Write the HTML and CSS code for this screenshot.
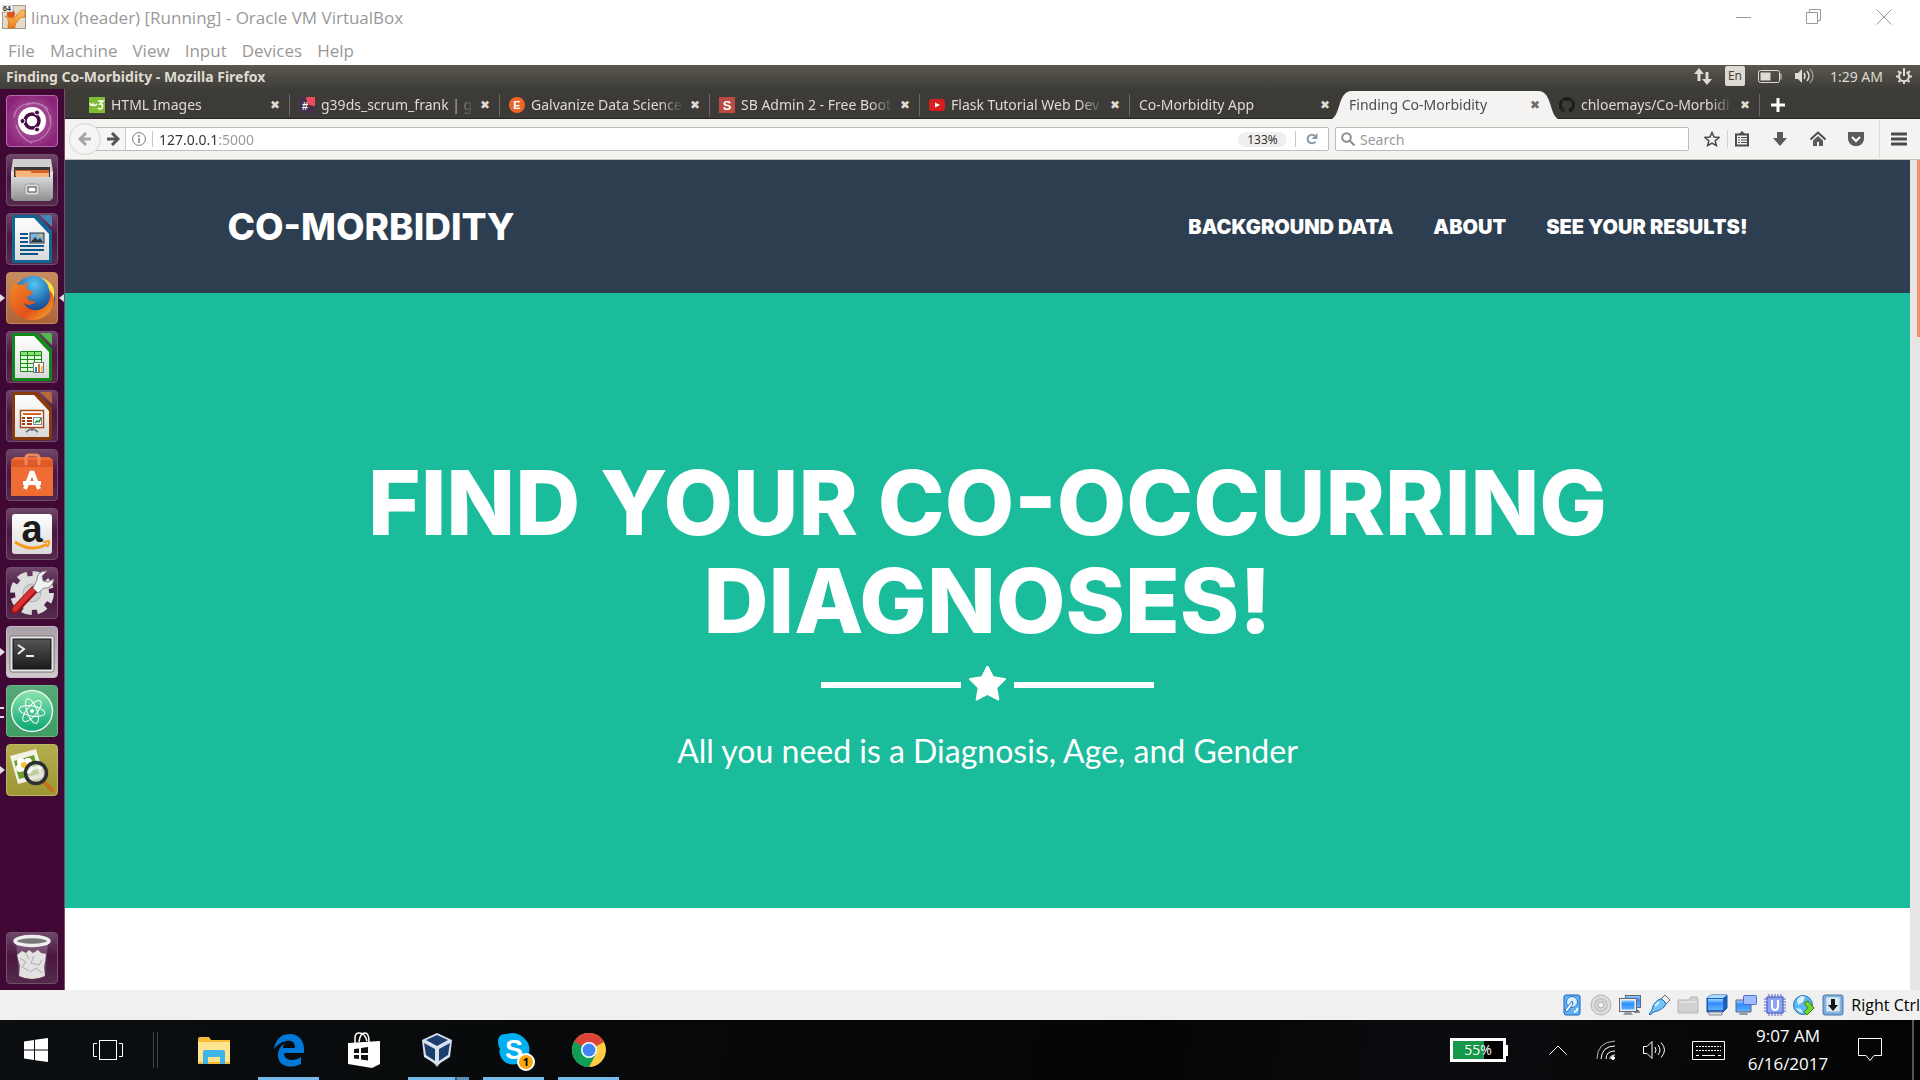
FILE: index.html
```html
<!DOCTYPE html>
<html lang="en">
<head>
<meta charset="utf-8">
<title>linux (header) [Running] - Oracle VM VirtualBox</title>
<meta name="viewport" content="width=device-width, initial-scale=1">
<link rel="stylesheet" href="styles.css">
</head>
<body>
<svg class="defs" aria-hidden="true">
  <defs>
    <linearGradient id="orange" x1="0" y1="0" x2="0" y2="1"><stop offset="0" stop-color="#ffc36b"/><stop offset="1" stop-color="#f07d1c"/></linearGradient>
    <linearGradient id="silver" x1="0" y1="0" x2="0" y2="1"><stop offset="0" stop-color="#e8e8e8"/><stop offset="1" stop-color="#8f8f8f"/></linearGradient>
    <linearGradient id="paper" x1="0" y1="0" x2="0" y2="1"><stop offset="0" stop-color="#fff"/><stop offset="1" stop-color="#d9d9d9"/></linearGradient>
    <linearGradient id="screen" x1="0" y1="0" x2="0" y2="1"><stop offset="0" stop-color="#9fd3ff"/><stop offset=".4" stop-color="#2f8dff"/><stop offset="1" stop-color="#65b5ff"/></linearGradient>
    <linearGradient id="term" x1="0" y1="0" x2="0" y2="1"><stop offset="0" stop-color="#555"/><stop offset="1" stop-color="#1c1c1c"/></linearGradient>
    <linearGradient id="leaf" x1="0" y1="0" x2="0" y2="1"><stop offset="0" stop-color="#8de6ad"/><stop offset="1" stop-color="#0aa574"/></linearGradient>
    <radialGradient id="globe" cx=".5" cy=".2" r=".8"><stop offset="0" stop-color="#55c5f2"/><stop offset=".6" stop-color="#1d62a8"/><stop offset="1" stop-color="#0d2a60"/></radialGradient>
    <linearGradient id="fox" x1="0" y1="0" x2="1" y2="1"><stop offset="0" stop-color="#f28a26"/><stop offset=".6" stop-color="#e2521b"/><stop offset="1" stop-color="#f7b32b"/></linearGradient>
  </defs>
</svg>

<header class="host-title">
  <svg class="vm-icon" viewBox="0 0 24 24" aria-hidden="true">
    <rect x=".5" y=".5" width="23" height="23" fill="#e4dccb" stroke="#a39a86"/>
    <path d="M3 11q5-1 8 2c4 0 5-9 12-8v7c-6 0-6 3-8 5-2 2-2 4-2 6H6c0-6 2-8-3-12z" fill="url(#orange)" stroke="#b9651a" stroke-width=".6"/>
    <circle cx="9" cy="9" r="4" fill="#e2551d"/>
    <rect x="0" y="0" width="11" height="7" fill="#fff" stroke="#777" stroke-width=".5"/>
    <text x="1" y="6" font-size="7" font-weight="700" fill="#222">64</text>
  </svg>
  <span class="host-name">linux (header) [Running] - Oracle VM VirtualBox</span>
  <div class="window-controls">
    <button type="button" aria-label="Minimize"><svg viewBox="0 0 16 16"><path d="M0 8.500h15"/></svg></button>
    <button type="button" aria-label="Restore"><svg viewBox="0 0 16 16"><path d="M.5 3.500h11v11H.5zM3.500 3.500v-3h11v11h-3"/></svg></button>
    <button type="button" aria-label="Close"><svg viewBox="0 0 16 16"><path d="M.5.5l15 15M15.500.5l-15 15"/></svg></button>
  </div>
</header>

<nav class="host-menu" aria-label="Virtual machine menu">
  <button type="button">File</button>
  <button type="button">Machine</button>
  <button type="button">View</button>
  <button type="button">Input</button>
  <button type="button">Devices</button>
  <button type="button">Help</button>
</nav>

<div class="guest">
  <div class="panel">
    <span class="panel-title">Finding Co-Morbidity - Mozilla Firefox</span>
    <div class="indicators">
      <svg width="18" height="17" viewBox="0 0 18 17" fill="#dfdbd2"><path d="M5 0l5 6H6.500v7h-3V6H0zM13 17l-5-6h3.500V4h3v7H18z"/></svg>
      <span class="lang">En</span>
      <svg width="24" height="13" viewBox="0 0 24 13"><rect x=".5" y=".5" width="21" height="12" rx="2" fill="none" stroke="#dfdbd2"/><rect x="2.500" y="2.500" width="10" height="8" fill="#dfdbd2"/><path d="M22.500 3.500h1v6h-1z" fill="#dfdbd2"/></svg>
      <svg width="20" height="16" viewBox="0 0 20 16" fill="none" stroke="#dfdbd2" stroke-width="1.500"><path d="M0 5h3l4-4v14l-4-4H0z" fill="#dfdbd2" stroke="none"/><path d="M9 5q2 3 0 6M12 3q4 5 0 10"/><path d="M15 1q6 7 0 14" opacity=".5"/></svg>
      <time class="panel-clock">1:29 AM</time>
      <svg width="16" height="16" viewBox="0 0 16 16" fill="none" stroke="#dfdbd2"><path d="M5.500 4a5 5 0 1 0 5 0" stroke-width="2"/><path d="M8 0v8M0 8.500h3M13 8.500h3M2 3l2 2M14 3l-2 2M2.500 14l2-2M13.500 14l-2-2M8 13v3" stroke-width="2"/></svg>
    </div>
  </div>

  <div class="desktop">
    <nav class="launcher" aria-label="Launcher">
      <button type="button" class="tile dash" aria-label="Search your computer">
        <svg viewBox="0 0 52 52"><path d="M8 22C10 8 30 3 42 14M44 20c4 14-6 26-20 27M10 30c3 10 10 16 16 18M20 10c14-6 24 4 24 16" fill="none" stroke="#fff" stroke-opacity=".3" stroke-width="1.500"/><circle cx="26" cy="26" r="14" fill="#fff"/><circle cx="26" cy="26" r="7" fill="none" stroke="#4c0b46" stroke-width="3.500"/><g fill="#4c0b46" stroke="#fff" stroke-width="1"><circle cx="16.500" cy="26" r="2.500"/><circle cx="31" cy="17.500" r="2.500"/><circle cx="31" cy="34.500" r="2.500"/></g></svg>
      </button>
      <button type="button" class="tile" aria-label="Files">
        <svg viewBox="0 0 52 52"><path d="M7 5h38l2 13H5z" fill="#cfcfcf"/><path d="M8 13h36v12H8z" fill="#3a3a3a"/><path d="M9 16h34v6H9z" fill="#d9622b"/><path d="M10 17h14l2 2h17v4H10z" fill="#f5b87c"/><path d="M5 18h3v5h36v-5h3v26l-3 3H8l-3-3z" fill="url(#silver)"/><rect x="19" y="30" width="14" height="11" rx="2" fill="#ddd" stroke="#999"/><rect x="22" y="33" width="8" height="5" fill="#fff" stroke="#444"/></svg>
      </button>
      <button type="button" class="tile" aria-label="LibreOffice Writer">
        <svg viewBox="0 0 52 52"><path d="M8 2h23l15 16v30q0 2-2 2H8q-2 0-2-2V4q0-2 2-2z" fill="#106797"/><path d="M34 2h10q2 0 2 2v10z" fill="#4287b8"/><path d="M9 5h19l15 16v26H9z" fill="url(#paper)"/><path d="M14 21h8M14 25h8M14 29h8M14 33h24M14 37h24M14 41h18" stroke="#0d568a" stroke-width="2"/><rect x="24" y="20" width="14" height="10" fill="#7db4df" stroke="#234"/><path d="M25 29l4-5 3 3 2-2 3 4z" fill="#333"/><circle cx="34.500" cy="22.500" r="1.500" fill="#f6b32d"/></svg>
      </button>
      <button type="button" class="tile firefox running focused" aria-label="Firefox">
        <svg viewBox="0 0 52 52"><circle cx="28" cy="25" r="21" fill="url(#globe)"/><path d="M33 5c8 4 9 8 10 12 4 12-2 18-7 21 10-2 15-14 11-23-2-4-6-8-14-10z" fill="#fbe14b"/><path d="M8 9c1 1 2 3 3 4 2-1 5-1 7 0 1-2 3-3 5-3-3 3-3 6-1 8l5 2c0 3-4 3-6 5 1 4 5 5 9 4-2 4-8 5-12 2 4 9 18 10 24 0 3-4 2-9 1-13 5 4 5 10 5 10 0 10-9 20-21 20C13 48 4 38 4 27c0-8 2-10 4-18z" fill="url(#fox)"/></svg>
      </button>
      <button type="button" class="tile" aria-label="LibreOffice Calc">
        <svg viewBox="0 0 52 52"><path d="M8 2h23l15 16v30q0 2-2 2H8q-2 0-2-2V4q0-2 2-2z" fill="#118a18"/><path d="M34 2h10q2 0 2 2v10z" fill="#51b84e"/><path d="M9 5h19l15 16v26H9z" fill="url(#paper)"/><path d="M14 20h22v20H14z" fill="#e3f7dc"/><path d="M14 21h22v3H14z" fill="#8be076"/><path d="M14.500 20.500h21v20h-21zM14 24.500h22M14 28.500h22M14 32.500h22M14 36.500h22M21.500 20v20M28.500 20v20" fill="none" stroke="#168a18"/><rect x="27.500" y="31.500" width="10" height="10" fill="#fff" stroke="#777"/><path d="M29 36h2v5h-2z" fill="#1688c8"/><path d="M32 33h2v8h-2z" fill="#e67519"/><path d="M35 35h2v6h-2z" fill="#f7be6e"/></svg>
      </button>
      <button type="button" class="tile" aria-label="LibreOffice Impress">
        <svg viewBox="0 0 52 52"><path d="M8 2h23l15 16v30q0 2-2 2H8q-2 0-2-2V4q0-2 2-2z" fill="#8b3a0c"/><path d="M34 2h10q2 0 2 2v10z" fill="#b7683c"/><path d="M9 5h19l15 16v26H9z" fill="url(#paper)"/><path d="M26 37v4M26 38l-6 4M26 38l6 4" stroke="#777" stroke-width="2"/><rect x="14.500" y="20.500" width="23" height="17" fill="#fff" stroke="#a8481a" stroke-width="1.500"/><path d="M17 24h18" stroke="#d2642a" stroke-width="2"/><path d="M16 28h3M16 31h3M16 34h3M21 28h5M21 31h5M21 34h5" stroke="#9b3d10" stroke-width="2"/><rect x="27.500" y="27.500" width="8" height="7" fill="#fff" stroke="#888"/><path d="M29 33l2-2 2 1 2-4" fill="none" stroke="#139a30" stroke-width="1.500"/></svg>
      </button>
      <button type="button" class="tile" aria-label="Ubuntu Software">
        <svg viewBox="0 0 52 52"><path d="M5 11l4-3h34l4 3v36H5z" fill="#f06c35"/><path d="M5 11h42v7H5z" fill="#e05a28"/><path d="M20 16V9q0-3 3-3h7q3 0 3 3v7" fill="none" stroke="#e9875f" stroke-width="3"/><path d="M26 22l-7 18M26 22l7 18M17 34h18" stroke="#fff" stroke-width="4" fill="none"/></svg>
      </button>
      <button type="button" class="tile" aria-label="Amazon">
        <svg viewBox="0 0 52 52"><rect x="6" y="6" width="40" height="40" rx="3" fill="url(#paper)"/><text x="26" y="34" text-anchor="middle" font-size="38" font-weight="700" fill="#1b1b1b">a</text><path d="M9 34q16 11 32 2" fill="none" stroke="#f79a1b" stroke-width="3"/><path d="M37 34l6-1q1 2-2 6" fill="none" stroke="#f79a1b" stroke-width="2"/></svg>
      </button>
      <button type="button" class="tile" aria-label="System Settings">
        <svg viewBox="0 0 52 52"><circle cx="26" cy="26" r="18" fill="none" stroke="#dcdcdc" stroke-width="8" stroke-dasharray="9 5.140"/><circle cx="26" cy="26" r="12.500" fill="#e4e4e4" stroke="#dedede" stroke-width="9"/><circle cx="26" cy="26" r="9" fill="#cfcfcf" stroke="#b0b0b0"/><path d="M9 43L28 23" stroke="#96131a" stroke-width="8" stroke-linecap="round"/><path d="M9 42L27 23" stroke="#d93232" stroke-width="5" stroke-linecap="round"/><path d="M27 21l5 5 6-5q8 1 10-9l-6 3-5-1-1-5 5-5q-10 0-10 9z" fill="#f2f2f2" stroke="#888"/></svg>
      </button>
      <button type="button" class="tile terminal running" aria-label="Terminal">
        <svg viewBox="0 0 52 52"><rect x="4" y="10" width="44" height="36" rx="2" fill="#e9e9e9" stroke="#777"/><rect x="7" y="13" width="38" height="30" fill="url(#term)" stroke="#111"/><path d="M12 19l6 4-6 5M20 30h8" fill="none" stroke="#eee" stroke-width="2"/></svg>
      </button>
      <button type="button" class="tile atom running many" aria-label="Atom">
        <svg viewBox="0 0 52 52"><circle cx="26" cy="26" r="20.500" fill="url(#leaf)" stroke="#e7f7ec" stroke-width="1.500"/><g fill="none" stroke="#fff"><ellipse cx="26" cy="26" rx="5" ry="13" transform="rotate(-20 26 26)"/><ellipse cx="26" cy="26" rx="5" ry="13" transform="rotate(40 26 26)"/><ellipse cx="26" cy="26" rx="5" ry="13" transform="rotate(100 26 26)"/></g><circle cx="26" cy="26" r="2" fill="#fff"/></svg>
      </button>
      <button type="button" class="tile viewer running" aria-label="Image Viewer">
        <svg viewBox="0 0 52 52"><path d="M4 12l26-7 8 28-26 7z" fill="#f2f2e6"/><path d="M8 17l20-6 5 19-20 5z" fill="#69a12c"/><g fill="#fff"><circle cx="15" cy="18" r="4"/><circle cx="22" cy="18" r="4"/><circle cx="14" cy="24" r="4"/><circle cx="22" cy="25" r="5"/></g><circle cx="18" cy="21" r="3" fill="#f4c62a"/><path d="M38 38l8 8" stroke="#c96f1c" stroke-width="4" stroke-linecap="round"/><circle cx="30" cy="29" r="10.500" fill="#dfe0d5" fill-opacity=".7" stroke="#2c3032" stroke-width="3.500"/><path d="M22 29q3-6 14-5" stroke="#fff" stroke-width="3" fill="none" opacity=".7"/></svg>
      </button>
      <button type="button" class="tile trash" aria-label="Trash">
        <svg viewBox="0 0 52 52"><path d="M10 10l3 34q13 6 26 0l3-34z" fill="#b9a5b7" fill-opacity=".35"/><path d="M11 23l5-4 4 2 3-3 4 3 5-3 3 3 5 1-1 8-1 5 1 9q-13 6-26 0l1-10z" fill="#e2e2e0"/><path d="M14 26l6 4-4 5 7 4M28 24l-3 7 8 2 3-5M24 40l6-4 6 5M20 22l3 5" stroke="#aaa" fill="none"/><ellipse cx="26" cy="9" rx="17" ry="4.500" fill="#777" stroke="#eee" stroke-width="3.500"/></svg>
      </button>
    </nav>

    <main class="browser">
      <div class="tabs">
        <div class="tab"><svg class="fav" viewBox="0 0 16 16"><rect width="16" height="16" fill="#80bd34"/><path d="M1 6q1 4 3 1 1 3 4 0M9 4h5l-3 3q4 0 2 4-2 2-4 0" fill="none" stroke="#fff" stroke-width="1.500"/></svg><span class="tab-label">HTML Images</span><button type="button" class="x" aria-label="Close tab">✖</button></div>
        <div class="tab"><svg class="fav" viewBox="0 0 16 16"><rect width="16" height="16" fill="#46304c"/><path d="M7 0h9v9q-8 1-9-9z" fill="#ed4a5b"/><text x="3" y="13" font-size="11" font-weight="700" fill="#fff">#</text></svg><span class="tab-label">g39ds_scrum_frank | g</span><button type="button" class="x" aria-label="Close tab">✖</button></div>
        <div class="tab"><svg class="fav" viewBox="0 0 16 16"><circle cx="8" cy="8" r="8" fill="#f16529"/><text x="8" y="12" text-anchor="middle" font-size="11" font-weight="700" fill="#fff">E</text></svg><span class="tab-label">Galvanize Data Science</span><button type="button" class="x" aria-label="Close tab">✖</button></div>
        <div class="tab"><svg class="fav" viewBox="0 0 16 16"><rect width="16" height="16" fill="#bb4a42"/><text x="8" y="13" text-anchor="middle" font-size="13" font-weight="700" fill="#fff">S</text></svg><span class="tab-label">SB Admin 2 - Free Boot</span><button type="button" class="x" aria-label="Close tab">✖</button></div>
        <div class="tab"><svg class="fav" viewBox="0 0 16 16"><rect y="2" width="16" height="12" rx="3" fill="#d81f1f"/><path d="M6 5.500l5 2.500-5 2.500z" fill="#fff"/></svg><span class="tab-label">Flask Tutorial Web Dev</span><button type="button" class="x" aria-label="Close tab">✖</button></div>
        <div class="tab last"><span class="tab-label">Co-Morbidity App</span><button type="button" class="x" aria-label="Close tab">✖</button></div>
        <div class="tab active"><svg class="tab-shape" viewBox="0 0 234 28" preserveAspectRatio="none" aria-hidden="true"><path d="M0 28C14 28 8 0 24 0h186c16 0 10 28 24 28z" fill="#f4f3f2"/></svg><span class="tab-label">Finding Co-Morbidity</span><button type="button" class="x" aria-label="Close tab">✖</button></div>
        <div class="tab"><svg class="fav" viewBox="0 0 16 16"><path fill="#1b1b1a" d="M8 0a8 8 0 0 0-2.500 15.600c.4.100.5-.2.500-.4v-1.400c-2.200.500-2.700-1-2.700-1-.4-.900-.9-1.200-.9-1.200-.700-.5.100-.5.100-.5.800.1 1.200.8 1.200.8.700 1.200 1.900.9 2.300.7.100-.5.300-.9.500-1.100-1.800-.2-3.600-.9-3.600-4 0-.9.300-1.600.8-2.200 0-.2-.3-1 .1-2.100 0 0 .7-.2 2.200.8a7.700 7.700 0 0 1 4 0c1.500-1 2.200-.8 2.200-.8.4 1.100.1 1.900.1 2.100.5.600.8 1.300.8 2.200 0 3.100-1.900 3.700-3.700 3.900.3.300.6.800.6 1.500v2.300c0 .2.100.5.500.4A8 8 0 0 0 8 0z"/></svg><span class="tab-label">chloemays/Co-Morbidi</span><button type="button" class="x" aria-label="Close tab">✖</button></div>
        <button type="button" class="new-tab" aria-label="New tab"><svg viewBox="0 0 14 14"><path d="M7 0v14M0 7h14" stroke="#fff" stroke-width="3"/></svg></button>
      </div>

      <div class="toolbar">
        <button type="button" class="back" aria-label="Back"><svg viewBox="0 0 14 14"><path d="M13 7H2M8 1L2 7l6 6" fill="none" stroke="#a5a5a4" stroke-width="3"/></svg></button>
        <div class="address">
          <button type="button" class="forward" aria-label="Forward"><svg viewBox="0 0 14 14"><path d="M1 7h10M6 1l6 6-6 6" fill="none" stroke="#555" stroke-width="3"/></svg></button>
          <svg class="info" viewBox="0 0 14 14" fill="none" stroke="#7a7a7a"><circle cx="7" cy="7" r="6.400"/><path d="M7 3v2M7 6v5" stroke-width="1.500"/></svg>
          <input class="url" type="text" aria-label="Address" value="127.0.0.1:5000">
          <button type="button" class="zoom">133%</button>
          <button type="button" class="reload" aria-label="Reload"><svg viewBox="0 0 12 12"><path d="M9.500 8.500A4.300 4.300 0 1 1 9 3" fill="none" stroke="#8b98ab" stroke-width="2"/><path d="M11.500 0v6h-6z" fill="#8b98ab"/></svg></button>
        </div>
        <label class="search"><svg viewBox="0 0 14 14" fill="none" stroke="#8d8d8c" stroke-width="2"><circle cx="5.500" cy="5.500" r="4.300"/><path d="M8.500 8.500l5 5"/></svg><input type="search" placeholder="Search" aria-label="Search"></label>
        <div class="tools">
          <button type="button" aria-label="Bookmark this page"><svg viewBox="0 0 16 16"><path d="M8 1.500l2 4.600 5 .4-3.800 3.200 1.200 4.900L8 12l-4.400 2.600 1.200-4.900L1 6.500l5-.4z" fill="none" stroke="#4b4b4b" stroke-width="1.500"/></svg></button>
          <button type="button" class="divided" aria-label="Show bookmarks"><svg viewBox="0 0 16 16"><path d="M2 3.500h12v11H2z" fill="none" stroke="#4b4b4b" stroke-width="2"/><path d="M5 3l3-3 3 3z" fill="#4b4b4b"/><path d="M4 6.500h2M4 9h2M4 11.500h2M7 6.500h6M7 9h6M7 11.500h6" stroke="#4b4b4b"/></svg></button>
          <button type="button" aria-label="Downloads"><svg viewBox="0 0 16 16"><path d="M5 1h6v6h4l-7 8-7-8h4z" fill="#5b5b5b"/></svg></button>
          <button type="button" aria-label="Home"><svg viewBox="0 0 16 16"><path d="M3 9.500V15h4v-4h2v4h4V9.500L8 5z" fill="#5b5b5b"/><path d="M.5 8.500L8 1.500l7.500 7" fill="none" stroke="#4b4b4b" stroke-width="2"/></svg></button>
          <button type="button" aria-label="Pocket"><svg viewBox="0 0 16 16"><path d="M0 1h16v6c0 11-16 11-16 0z" fill="#5b5b5b"/><path d="M4 6l4 4 4-4" fill="none" stroke="#fff" stroke-width="2"/></svg></button>
          <button type="button" class="burger" aria-label="Open menu"><svg viewBox="0 0 16 16"><path d="M1 3h14M1 8h14M1 13h14" stroke="#4b4b4b" stroke-width="3" stroke-linecap="round"/></svg></button>
        </div>
      </div>

      <div class="viewport">
        <div class="page">
          <nav class="navbar">
            <div class="container">
              <a class="brand" href="#top">CO-MORBIDITY</a>
              <div class="links">
                <a href="#background">BACKGROUND DATA</a>
                <a href="#about">ABOUT</a>
                <a href="#results">SEE YOUR RESULTS!</a>
              </div>
            </div>
          </nav>
          <section class="hero">
            <h1>FIND YOUR CO-OCCURRING DIAGNOSES!</h1>
            <div class="star-rule"><svg viewBox="64 64 1664 1664" aria-hidden="true"><path fill="#fff" d="M1728 647q0 22-26 48l-363 354 86 500q1 7 1 20 0 21-10.500 35.500t-30.500 14.500q-19 0-40-12l-449-236-449 236q-22 12-40 12-21 0-31.500-14.500t-10.500-35.500q0-6 2-20l86-500-364-354q-25-27-25-48 0-37 56-46l502-73 225-455q19-41 49-41t49 41l225 455 502 73q56 9 56 46z"/></svg></div>
            <p class="tagline">All you need is a Diagnosis, Age, and Gender</p>
          </section>
        </div>
        <div class="scrollbar"><div class="thumb"></div></div>
      </div>
    </main>
  </div>
</div>

<footer class="vm-status">
  <svg viewBox="0 0 22 22"><rect x="3" y="1" width="16" height="20" rx="2" fill="#5fb4f7" stroke="#1b62bf"/><circle cx="11" cy="8" r="5.500" fill="#d7efff" stroke="#2b77c5"/><path d="M4 16l7-9 1 3-6 8z" fill="#fff" stroke="#2b77c5"/><path d="M13 18q4-1 3-4" stroke="#fff" fill="none" stroke-width="2"/></svg>
  <svg viewBox="0 0 22 22"><circle cx="11" cy="11" r="10" fill="#dcdcdc" stroke="#b5b5b5"/><circle cx="11" cy="11" r="6" fill="none" stroke="#c5c5c5" stroke-width="2"/><circle cx="11" cy="11" r="3" fill="#f4f4f4" stroke="#aaa"/></svg>
  <svg viewBox="0 0 22 22"><rect x="6.500" y="1.500" width="15" height="12" fill="url(#screen)" stroke="#667"/><path d="M16 14v4h5" stroke="#889" stroke-width="2"/><rect x="1.500" y="5.500" width="15" height="11" fill="url(#screen)" stroke="#eee" stroke-width="2"/><rect x=".5" y="4.500" width="17" height="13" fill="none" stroke="#667"/><path d="M6 18h6l2 3H4z" fill="#99a"/></svg>
  <svg viewBox="0 0 22 22"><path d="M13 5l4-4 5 5-4 4z" fill="#eee" stroke="#667"/><path d="M10 6q3-2 5 0l2 2q2 3-1 5-4 4-10 5l-4 3-1-1 3-4q0-6 6-10z" fill="#73c1f5" stroke="#286eb5"/><path d="M7 12l4-4" stroke="#d6f0ff" stroke-width="2"/></svg>
  <svg viewBox="0 0 22 22"><path d="M1 19V6h11l2-3h6l1 3v13z" fill="#d2d2d2" stroke="#b5b5b5"/><path d="M2 8h18" stroke="#eee"/></svg>
  <svg viewBox="0 0 22 22"><path d="M1 4l4-3h16v13l-4 4H1z" fill="#1a61c4" stroke="#234f91"/><path d="M1 4l4-3h16l-4 3z" fill="#a8d8ff"/><path d="M2 5h15v11H2z" fill="url(#screen)"/><path d="M3 18h13v3H3z" fill="#ddd" stroke="#889"/></svg>
  <svg viewBox="0 0 22 22"><path d="M1 6h15v12H1z" fill="url(#screen)" stroke="#667"/><path d="M5 18h7l1 3H4z" fill="#99a"/><rect x="8.500" y="1.500" width="13" height="9" rx="1" fill="#a1bcff" stroke="#4f6fd2"/></svg>
  <svg viewBox="0 0 22 22"><path d="M5 0v22M8 0v22M11 0v22M14 0v22M17 0v22M0 5h22M0 8h22M0 11h22M0 14h22M0 17h22" stroke="#5d65bf"/><rect x="3" y="3" width="16" height="16" fill="#8aa4f4" stroke="#4450bb"/><path d="M8 6v6q0 4 3 4t3-4V6" fill="none" stroke="#fff" stroke-width="2"/></svg>
  <svg viewBox="0 0 22 22"><circle cx="10" cy="11" r="9.500" fill="#5cb6f0" stroke="#2d75b2"/><path d="M4 6q4-6 8-3l-2 5-5 3zM3 14l5 1 2 4q-5-1-7-5z" fill="#d9f0fb"/><path d="M11 9l4-2 6 7-7 7-3-3 4-4z" fill="#76d52f" stroke="#338014"/></svg>
  <svg viewBox="0 0 22 22"><rect x="1" y="1" width="20" height="20" rx="2" fill="#7cadda" stroke="#4677a8"/><rect x="4" y="3" width="14" height="15" rx="1" fill="#d9eaf7" stroke="#9abddd"/><path d="M9 5h4v6h3l-5 6-5-6h3z" fill="#161616"/></svg>
  <span class="host-key">Right Ctrl</span>
</footer>

<footer class="taskbar">
  <button type="button" class="start" aria-label="Start"><svg viewBox="0 0 24 24" fill="#fff"><path d="M0 3.500L10 2v9.500H0zM11 1.800L24 0v11.500H11zM0 12.500h10V22L0 20.500zM11 12.500h13V24l-13-1.800z"/></svg></button>
  <button type="button" class="task-view" aria-label="Task view"><svg viewBox="0 0 30 20" fill="none" stroke="#fff"><rect x="6.500" y=".5" width="17" height="19"/><path d="M4 3.500H.5v13H4M26 3.500h3.500v13H26"/></svg></button>
  <span class="grip"></span>
  <div class="apps">
    <button type="button" aria-label="File Explorer"><svg viewBox="0 0 36 36"><path d="M2 7q0-2 2-2h9l2 3h19v24H2z" fill="#f5bd35"/><path d="M2 10h32v20H2z" fill="#ffe48f"/><path d="M7 20q0-2 2-2h18q2 0 2 2v12h-5v-7H12v7H7z" fill="#3db5e6"/></svg></button>
    <button type="button" class="open" aria-label="Edge"><svg viewBox="0 0 36 36"><path d="M3 17C5 6 11 2 19 2c9 0 14 7 14 15v4H13c0 8 10 9 17 4v7c-10 5-23 3-23-9 0-6 4-10 7-12-2 2-2 4-2 5h12c0-7-5-8-9-7-5 1-9 4-12 8z" fill="#0078d7"/></svg></button>
    <button type="button" aria-label="Store"><svg viewBox="0 0 36 36"><path d="M2 11l32-2v23l-8 4-24-4z" fill="#fff"/><path d="M9 11V6q0-5 4-5 6 0 8 8M13 10q1-9 6-9 4 0 4 9" fill="none" stroke="#fff" stroke-width="1.500"/><path d="M8 17l5-.5V21H8zM15 16l7-1v6h-7zM8 23h5v4l-5-.5zM15 23h7v5.500l-7-1z" fill="#111"/></svg></button>
    <button type="button" class="split" aria-label="VirtualBox"><svg viewBox="0 0 36 36"><path d="M12 28l6 7 6-7z" fill="#aeb1cf"/><path d="M18 1l15 7-2 17-13 8L5 25 3 8z" fill="#d8e2ee"/><path d="M18 3l11 5-11 6L7 8zM5 11l11 6v12l-9-6zM31 11l-11 6v12l9-6z" fill="#1c3f6e"/></svg></button>
    <button type="button" class="open" aria-label="Skype"><svg viewBox="0 0 36 36"><path d="M2 10q0-9 9-8 9-3 17 4 7 6 5 15 3 8-4 11-5 2-8 0Q11 34 6 27q-4-6-2-10-2-3-2-7z" fill="#00aff0"/><text x="18" y="27" text-anchor="middle" font-size="27" font-weight="700" fill="#fff">S</text></svg><span class="badge">1</span></button>
    <button type="button" class="open" aria-label="Chrome"><svg viewBox="0 0 36 36"><circle cx="18" cy="18" r="17" fill="#ffcd42"/><path d="M18 18L3 10A17 17 0 0 1 33 10z" fill="#db4437"/><path d="M18 18L3.300 9.500A17 17 0 0 0 18 35l7-13z" fill="#0f9d58"/><circle cx="18" cy="18" r="8" fill="#fff"/><circle cx="18" cy="18" r="6.500" fill="#4285f4"/></svg></button>
  </div>
  <div class="tray">
    <span class="battery">55%</span>
    <button type="button" aria-label="Show hidden icons"><svg width="18" height="10" viewBox="0 0 18 10"><path d="M.5 9.500L9 1l8.500 8.500"/></svg></button>
    <button type="button" aria-label="Network"><svg width="20" height="20" viewBox="0 0 20 20"><path d="M1 19Q1 2 19 1" opacity=".7"/><path d="M5 19Q6 6 19 6M10 19q0-8 9-8M14 19q0-4 5-4" /><circle cx="17" cy="18" r="1.500" fill="#fff"/></svg></button>
    <button type="button" aria-label="Volume"><svg width="23" height="18" viewBox="0 0 23 18"><path d="M.5 5.500H4l5-5v17l-5-5H.5zM12 6q2 3 0 6M15 4q4 5 0 10M18 1.500q7 7.500 0 15"/></svg></button>
    <button type="button" class="keyboard" aria-label="Touch keyboard"><svg width="33" height="19" viewBox="0 0 33 19"><path d="M.5.5h32v18H.5z"/><path d="M4 5.500h25M4 9.500h25" stroke-dasharray="2 1"/><path d="M4 14.500h3M10 14.500h13M26 14.500h3"/></svg></button>
    <div class="clock"><time>9:07 AM</time><time>6/16/2017</time></div>
    <button type="button" class="notifications" aria-label="Notifications"><svg width="24" height="24" viewBox="0 0 24 24"><path d="M.5.5h23v17H16l-4 5-4-5H.5z"/></svg></button>
    <span class="show-desktop"></span>
  </div>
</footer>
</body>
</html>
```

FILE: styles.css
```css
* { box-sizing: border-box; }

html, body { height: 100%; }

body {
  margin: 0;
  min-height: 100vh;
  display: flex;
  flex-direction: column;
  overflow: hidden;
  background: #fff;
  color: #000;
  font-family: "Open Sans", "Noto Sans", sans-serif;
}

button {
  display: flex;
  align-items: center;
  justify-content: center;
  margin: 0;
  padding: 0;
  border: 0;
  background: none;
  color: inherit;
  font: inherit;
}

input {
  min-width: 0;
  padding: 0;
  border: 0;
  outline: 0;
  background: none;
  font: inherit;
}

svg { display: block; flex: none; }
svg text { font-family: "Liberation Sans", sans-serif; }
.defs { position: absolute; width: 0; height: 0; }

/* Host window frame */
.host-title {
  flex: none;
  display: flex;
  align-items: center;
  height: 36px;
  padding: 0 1px 2px 2px;
  color: #999;
  font-size: 17px;
}
.vm-icon { width: 24px; height: 24px; margin-right: 5px; }
.host-name { flex: 1; }
.window-controls { display: flex; }
.window-controls button { width: 70px; height: 32px; }
.window-controls svg { width: 16px; height: 16px; fill: none; stroke: #999; }

.host-menu {
  flex: none;
  display: flex;
  align-items: center;
  gap: 15px;
  height: 29px;
  padding: 0 8px;
  color: #999;
  font-size: 17px;
}

/* Guest desktop */
.guest {
  flex: 1;
  min-height: 0;
  display: flex;
  flex-direction: column;
  font-family: "Noto Sans", "Open Sans", sans-serif;
}
.panel {
  flex: none;
  display: flex;
  align-items: center;
  justify-content: space-between;
  height: 24px;
  padding: 0 8px 2px 6px;
  background: linear-gradient(#5a574d, #3e3d39);
  color: #dfdbd2;
  font-size: 14px;
}
.panel-title { font-weight: 700; }
.indicators { display: flex; align-items: center; gap: 13px; }
.panel-clock { margin-left: 2px; }
.lang {
  width: 20px;
  border-radius: 2px;
  background: #dfdbd2;
  color: #45433e;
  font-size: 12px;
  line-height: 20px;
  text-align: center;
}

.desktop { flex: 1; min-height: 0; display: flex; }

.launcher {
  flex: none;
  display: flex;
  flex-direction: column;
  gap: 7px;
  width: 65px;
  padding: 6px;
  border-right: 1px solid #7d4c74;
  background: #400835;
}
.tile {
  position: relative;
  width: 52px;
  height: 52px;
  border: 1px solid #71506c;
  border-radius: 4px;
  background: linear-gradient(#70466a, #4a1740 45%, #552a4d);
}
.tile svg { width: 52px; height: 52px; }
.dash { background: radial-gradient(#b56aa9, #8b2478 80%); border-color: #b56bab; }
.firefox { background: linear-gradient(#c78d62, #ad6538); border-color: #c08860; }
.terminal { background: linear-gradient(#aaa0a8, #cfc9ce); border-color: #c5bdc3; }
.atom { background: linear-gradient(#57a878, #3f9c63); border-color: #6abb88; }
.viewer { background: linear-gradient(#b3ad4e, #9c9734); border-color: #bcb664; }
.trash { margin-top: auto; }
.running::before {
  content: "";
  position: absolute;
  left: -7px;
  top: 21px;
  border: 4px solid transparent;
  border-left: 5px solid #e3dbe1;
  border-right: 0;
}
.focused::after {
  content: "";
  position: absolute;
  right: -7px;
  top: 21px;
  border: 4px solid transparent;
  border-right: 5px solid #e3dbe1;
  border-left: 0;
}
.many::before {
  width: 4px;
  height: 7px;
  border: solid #e3dbe1;
  border-width: 2px 0;
}

/* Firefox */
.browser { flex: 1; min-width: 0; display: flex; flex-direction: column; }
.tabs {
  flex: none;
  display: flex;
  align-items: center;
  height: 30px;
  padding: 2px 0 0 15px;
  border-bottom: 1px solid #262522;
  background: #3c3b37;
  color: #dfdbd2;
  font-size: 14px;
}
.tab {
  position: relative;
  flex: 0 1 210px;
  min-width: 0;
  display: flex;
  align-items: center;
  gap: 6px;
  height: 22px;
  padding: 0 9px;
  border-right: 1px solid #6b6a66;
}
.tab.last, .tab.active { border-right-color: transparent; }
.fav { width: 16px; height: 16px; }
.tab-label {
  position: relative;
  flex: 1;
  overflow: hidden;
  white-space: nowrap;
  line-height: 20px;
  mask-image: linear-gradient(to left, transparent, #000 24px);
}
.x { position: relative; width: 10px; font-size: 12px; line-height: 20px; }
.active { color: #4b4b4a; }
.active .x { color: #6b6b69; }
.tab-shape { position: absolute; left: -12px; top: -3px; width: 234px; height: 29px; }
.new-tab { margin-left: 11px; }
.new-tab svg { width: 14px; height: 14px; }

.toolbar {
  flex: none;
  display: flex;
  align-items: center;
  height: 41px;
  padding: 0 3px 0 4px;
  border-bottom: 1px solid #c4c2bf;
  background: #f4f3f2;
  color: #333;
  font-size: 15px;
}
.back {
  position: relative;
  flex: none;
  width: 32px;
  height: 32px;
  margin-right: -6px;
  border: 1px solid #d5d3d1;
  border-radius: 50%;
  background: #f6f5f4;
}
.back svg, .forward svg { width: 14px; height: 14px; }
.address, .search {
  display: flex;
  align-items: center;
  height: 24px;
  border: 1px solid #bfbdba;
  border-radius: 2px;
  background: #fff;
}
.address { flex: 1; min-width: 0; }
.forward { width: 30px; height: 22px; padding-left: 4px; border-right: 1px solid #c9c7c4; background: #f6f5f4; }
.info { width: 14px; height: 14px; margin: 0 6px; }
.url {
  flex: 1;
  height: 16px;
  padding-left: 6px;
  border-left: 1px solid #c9c7c4;
  background: linear-gradient(to right, #333 66px, #999 66px);
  background-clip: text;
  color: transparent;
  caret-color: #333;
  font-size: 14px;
}
.zoom { width: 49px; height: 15px; border-radius: 8px; background: #f0efee; font-size: 12px; }
.reload { width: 33px; height: 16px; margin-left: 8px; border-left: 1px solid #c9c7c4; }
.reload svg { width: 12px; height: 12px; }
.search { flex: 0 1 354px; min-width: 0; gap: 5px; margin-left: 6px; padding: 0 5px; }
.search svg { width: 14px; height: 14px; }
.search input { flex: 1; font-size: 14px; color: #333; }
.search input::placeholder { color: #999; opacity: 1; }
.tools { display: flex; align-items: center; margin-left: 4px; }
.tools button { width: 38px; height: 38px; }
.tools svg { width: 16px; height: 16px; }
.tools .divided { width: 30px; margin-left: -4px; background: linear-gradient(#d5d3d1, #d5d3d1) 0 50% / 1px 18px no-repeat; }
.tools .divided + button { margin-left: 4px; }
.tools .burger { margin-left: 4px; border-left: 1px solid #dcdad8; }

/* Web page */
.viewport { flex: 1; min-height: 0; display: flex; }
.page { flex: 1; min-width: 0; background: #fff; color: #fff; }
.scrollbar { flex: none; width: 10px; background: #e6e5e3; }
.thumb { width: 3px; height: 177px; margin-left: 7px; background: #f38f6c; }

.navbar { display: flex; align-items: center; height: 133px; background: #2c3e50; }
.container {
  flex: 1;
  display: flex;
  align-items: center;
  justify-content: space-between;
  max-width: 1520px;
  margin: 0 auto;
}
.navbar a { color: #fff; text-decoration: none; font-family: Inter, sans-serif; }
.navbar .brand { font-size: 37px; font-weight: 800; }
.links { display: flex; gap: 40px; font-size: 20px; font-weight: 900; }

.hero {
  display: flex;
  flex-direction: column;
  align-items: center;
  padding: 161px 20px 133px;
  background: #1abc9c;
  text-align: center;
}
.hero h1 {
  max-width: 1520px;
  margin: 0;
  font-family: Inter, sans-serif;
  font-size: 90px;
  font-weight: 800;
  line-height: 98px;
}
.star-rule { display: flex; align-items: center; gap: 8px; margin-top: 16px; }
.star-rule svg { width: 37px; height: 37px; }
.star-rule::before, .star-rule::after { content: ""; width: 140px; height: 6px; background: #fff; }
.tagline { margin: 24px 0 0; font-family: Lato, sans-serif; font-size: 32px; line-height: 48px; }

/* Virtual machine status bar */
.vm-status {
  flex: none;
  display: flex;
  align-items: center;
  justify-content: flex-end;
  gap: 7px;
  height: 30px;
  background: #f0f0f0;
  font-size: 16px;
}
.vm-status svg { width: 22px; height: 22px; }

/* Windows taskbar */
.taskbar {
  flex: none;
  display: flex;
  align-items: center;
  height: 60px;
  background: linear-gradient(100deg, #0c0f12, #07090a 30%, #050506 60%, #0b0c0f 75%, #040404);
  color: #fff;
}
.start { width: 72px; height: 60px; }
.start svg { width: 24px; height: 24px; }
.task-view { width: 72px; height: 60px; }
.task-view svg { width: 30px; height: 20px; }
.grip { width: 5px; height: 36px; margin: 0 25px 0 9px; border: solid #444; border-width: 0 1px; }
.apps { display: flex; gap: 14px; }
.apps button { position: relative; width: 61px; height: 60px; }
.apps svg { width: 36px; height: 36px; }
.open { box-shadow: inset 0 -3px #76b9ed; }
.apps .split {
  padding-right: 4px;
  background: linear-gradient(to right, #76b9ed 47px, #35536a 47px, #35536a 49px, #5b8fb8 49px) bottom / 100% 3px no-repeat;
}
.badge {
  position: absolute;
  right: 9px;
  top: 33px;
  width: 18px;
  height: 18px;
  border: 2px solid #fff;
  border-radius: 50%;
  background: #f9a70c;
  color: #000;
  font-size: 11px;
  font-weight: 700;
  line-height: 14px;
}
.tray { display: flex; align-items: center; margin-left: auto; }
.tray svg { fill: none; stroke: #fff; }
.tray button { width: 48px; height: 60px; }
.tray .keyboard { width: 60px; }
.battery {
  position: relative;
  width: 56px;
  height: 24px;
  margin-right: 28px;
  border: 3px solid #fff;
  background: linear-gradient(to right, #16984a 31px, #000 31px);
  font-size: 14px;
  line-height: 18px;
  text-align: center;
}
.battery::after {
  content: "";
  position: absolute;
  right: -5px;
  top: 4px;
  width: 3px;
  height: 11px;
  background: #fff;
}
.clock {
  display: flex;
  flex-direction: column;
  width: 100px;
  font-size: 17px;
  line-height: 28px;
  text-align: center;
}
.tray .notifications { width: 64px; margin-right: 10px; }
.show-desktop { width: 8px; height: 60px; border-left: 2px solid #555; }
```
